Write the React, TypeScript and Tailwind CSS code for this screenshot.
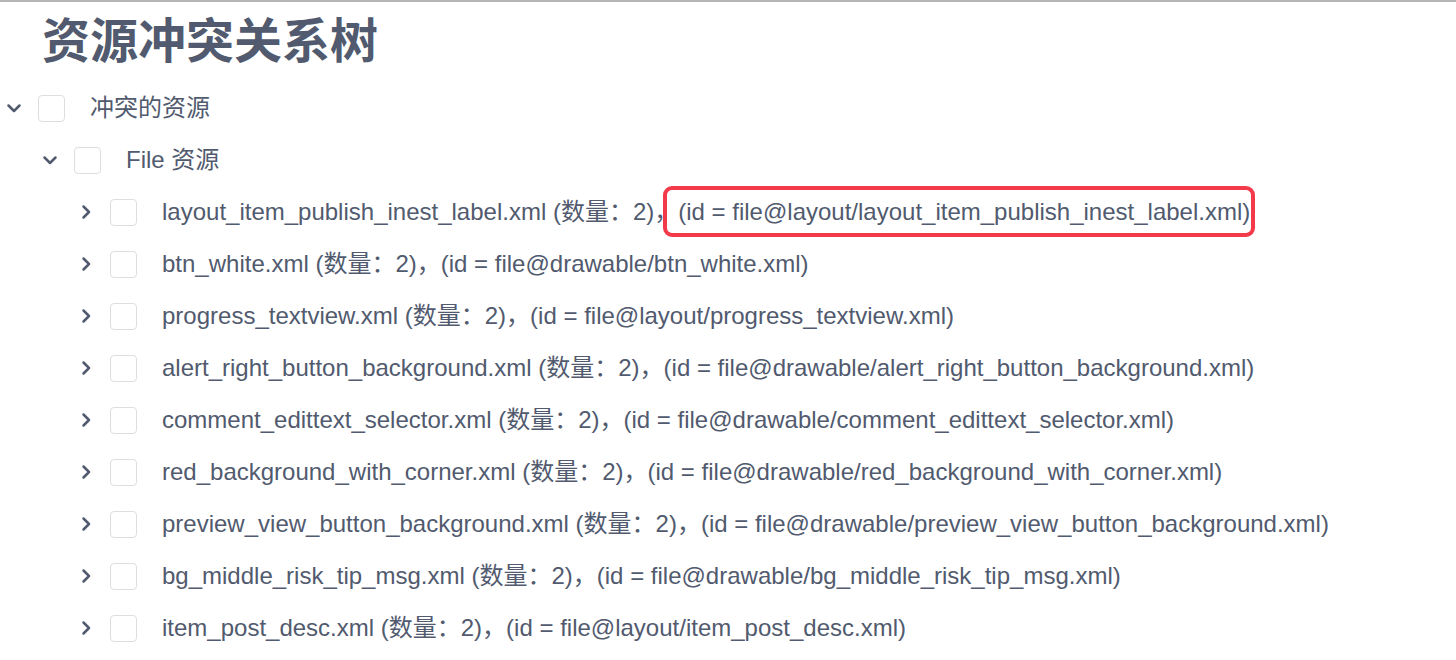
import React from "react";

const rows: { name: string; id: string; boxed?: boolean }[] = [
  { name: "layout_item_publish_inest_label.xml", id: "file@layout/layout_item_publish_inest_label.xml", boxed: true },
  { name: "btn_white.xml", id: "file@drawable/btn_white.xml" },
  { name: "progress_textview.xml", id: "file@layout/progress_textview.xml" },
  { name: "alert_right_button_background.xml", id: "file@drawable/alert_right_button_background.xml" },
  { name: "comment_edittext_selector.xml", id: "file@drawable/comment_edittext_selector.xml" },
  { name: "red_background_with_corner.xml", id: "file@drawable/red_background_with_corner.xml" },
  { name: "preview_view_button_background.xml", id: "file@drawable/preview_view_button_background.xml" },
  { name: "bg_middle_risk_tip_msg.xml", id: "file@drawable/bg_middle_risk_tip_msg.xml" },
  { name: "item_post_desc.xml", id: "file@layout/item_post_desc.xml" },
];

function Chevron({ open }: { open: boolean }) {
  return (
    <span className="flex h-[20px] w-[20px] items-center justify-center text-[#515a6e]">
      <svg width="20" height="20" viewBox="0 0 20 20" fill="none" stroke="currentColor" strokeWidth="2.5" strokeLinecap="round" strokeLinejoin="round">
        {open ? <path d="M4.5 7.5 L10 13 L15.5 7.5" /> : <path d="M7.5 4.5 L13 10 L7.5 15.5" />}
      </svg>
    </span>
  );
}

function Box() {
  return <span className="ml-[14px] block h-[27px] w-[27px] rounded-[4px] border border-[#dcdee2] bg-white" />;
}

function Label({ children }: { children: React.ReactNode }) {
  return <div className="ml-[25px] whitespace-nowrap text-[24px] leading-[30px] text-[#515a6e]">{children}</div>;
}

export default function App() {
  return (
    <div
      className="h-[660px] w-[1456px] overflow-hidden border-t-2 border-[#b4b4b4] bg-white"
      style={{ fontFamily: '"Liberation Sans", Arial, "Noto Sans CJK SC", sans-serif' }}
    >
      <h1 className="ml-[42px] mt-[12px] h-[56px] text-[48px] font-bold leading-[56px] text-[#515a6e]">
        资源冲突关系树
      </h1>
      <div className="pl-[4px] pt-[12px]">
        <div className="flex h-[52px] items-center">
          <Chevron open />
          <Box />
          <Label>冲突的资源</Label>
        </div>
        <div className="pl-[36px]">
          <div className="flex h-[52px] items-center">
            <Chevron open />
            <Box />
            <Label>File 资源</Label>
          </div>
          <div className="pl-[36px]">
            {rows.map((r) => (
              <div key={r.name} className="flex h-[52px] items-center">
                <Chevron open={false} />
                <Box />
                <Label>
                  {r.name} (数量：2)，
                  {r.boxed ? (
                    <span className="relative">
                      <span className="pointer-events-none absolute -bottom-[12px] -left-[15px] -right-[5px] -top-[12px] rounded-[9px] border-[4px] border-[#f23a4b]" />
                      (id = {r.id})
                    </span>
                  ) : (
                    <>(id = {r.id})</>
                  )}
                </Label>
              </div>
            ))}
          </div>
        </div>
      </div>
    </div>
  );
}
